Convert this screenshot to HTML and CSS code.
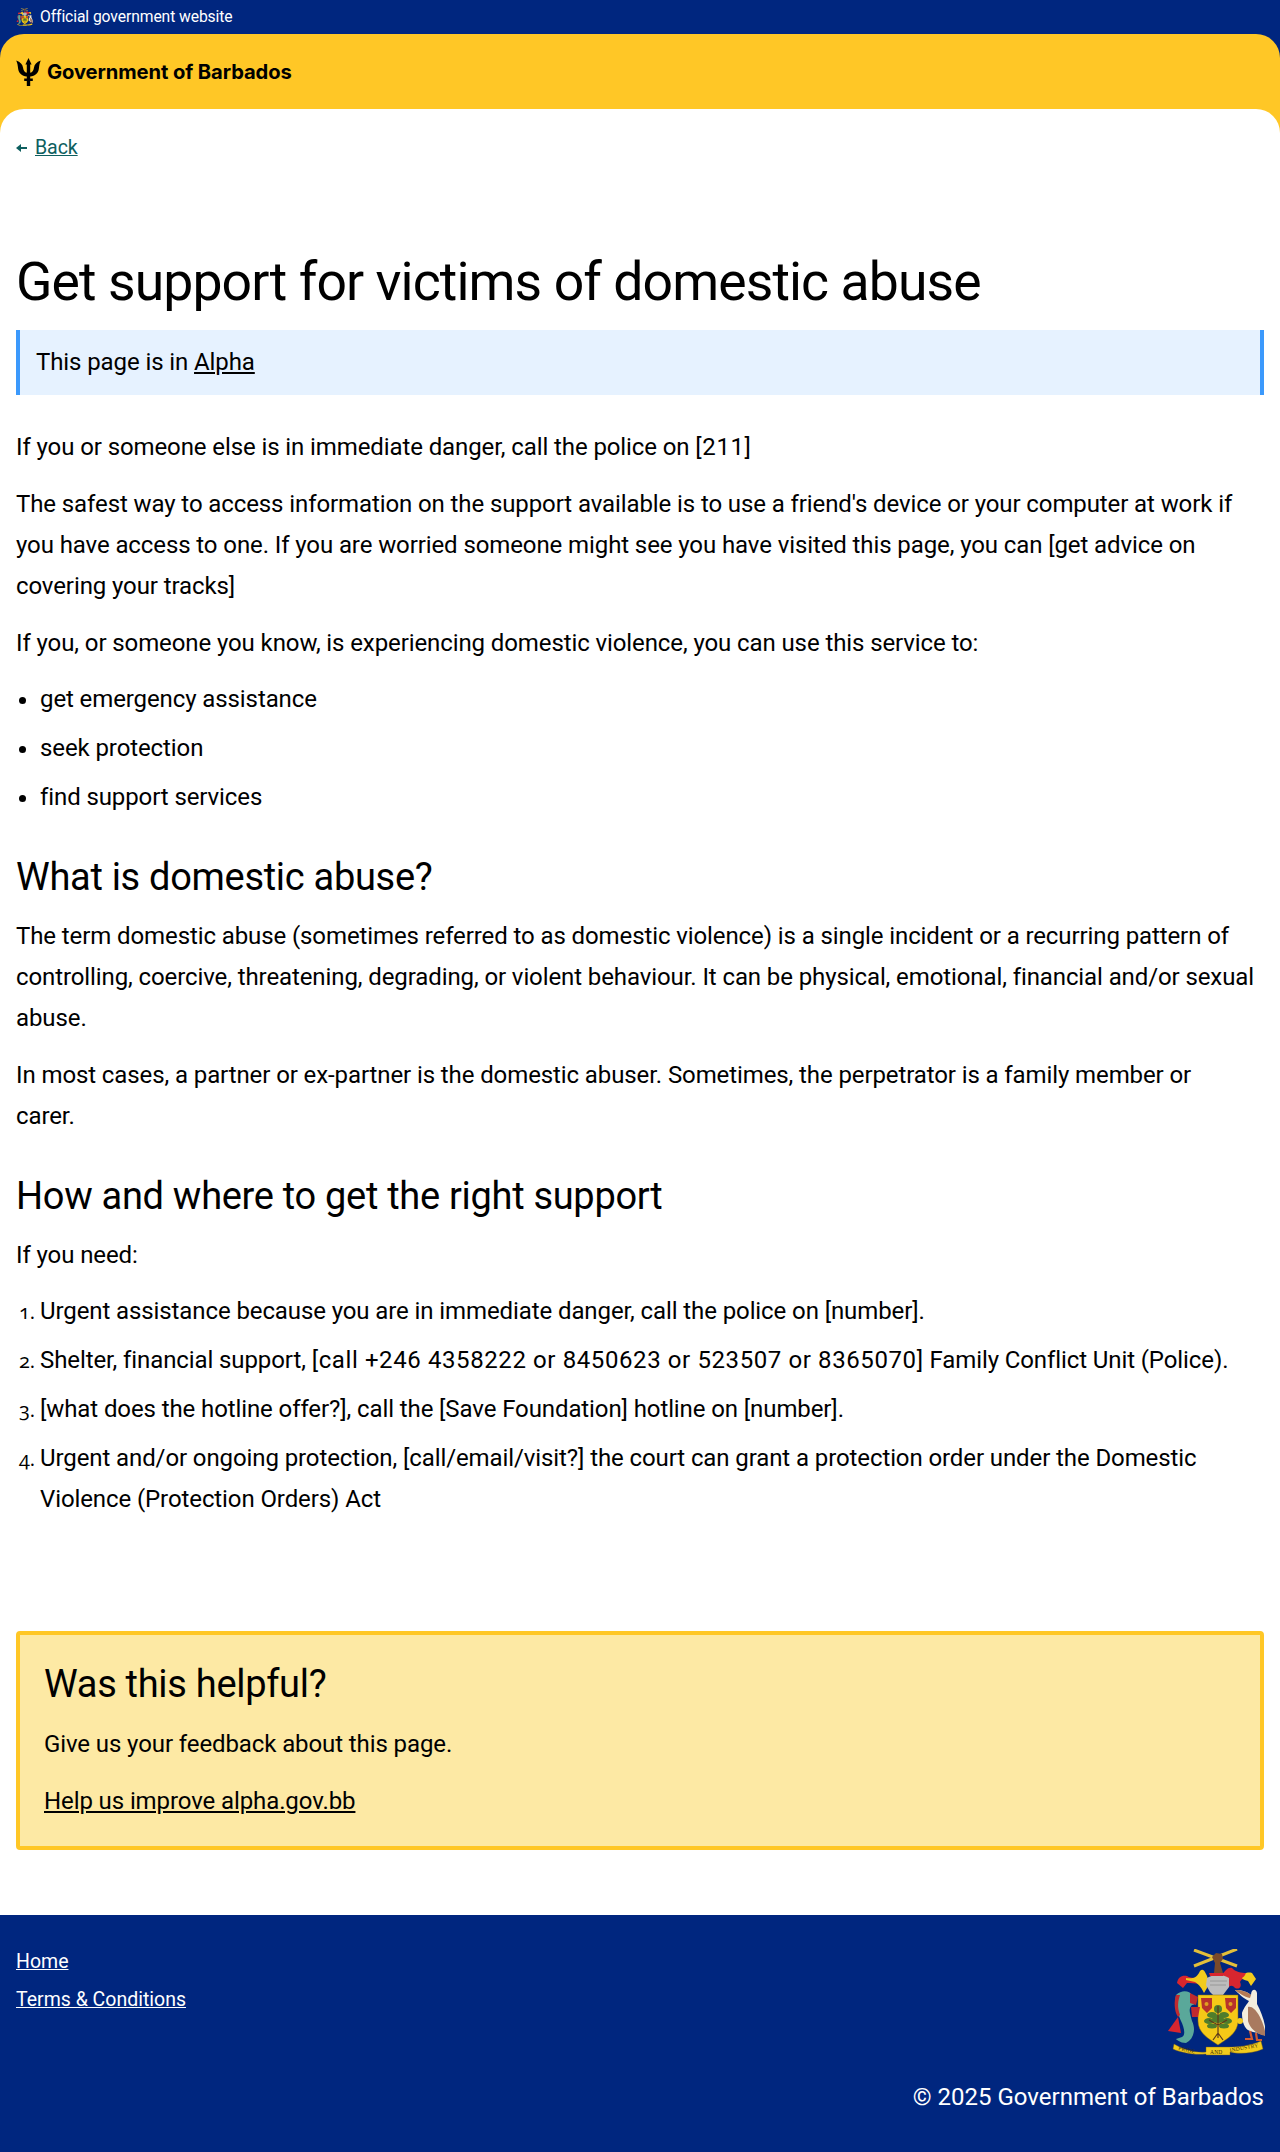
FILE: index.html
```html
<!DOCTYPE html>
<html lang="en">
<head>
    <meta charset="UTF-8">
    <meta name="viewport" content="width=device-width, initial-scale=1.0">
    <title>Get support for victims of domestic abuse</title>
    <link rel="stylesheet" href="styles.css">
</head>
<body>
    <svg class="sprite" width="0" height="0" aria-hidden="true">
        <symbol id="crest" viewBox="0 0 150 150">
            <!-- crossed sugar cane and arm -->
            <path d="M62 45 L105 28 M62 29 L105 45" stroke="#e3bf3a" stroke-width="3" fill="none"/>
            <path d="M80 36 L84 32 L90 33 L91 38 L88 42 L91 52 L82 52 L83 42 Z" fill="#7a4a2a"/>
            <!-- mantling -->
            <path d="M45 62 C46 56 50 54 55 55 C60 58 64 56 68 58 L68 63 C63 62 59 62 55 62 L51 67 Z" fill="#d8262f"/>
            <path d="M54 57 C60 58 64 57 67 52 C69 47 72 48 74 53 C76 56 77 62 75 67 L72 72 C70 68 68 64 63 61 C60 60 57 60 54 59 Z" fill="#f2cb1d"/>
            <path d="M90 54 C93 50 96 46 100 47 C103 51 110 52 114 52 L115 58 C112 57 109 58 108 61 C110 65 108 69 103 67 C100 63 97 65 95 68 L90 62 Z" fill="#d8262f"/>
            <path d="M114 52 C118 51 120 52 120 52 L124 58 L119 65 L116 60 C112 59 110 58 110 57 C112 56 113 54 114 52 Z" fill="#f2cb1d"/>
            <!-- helmet -->
            <path d="M75 57 C81 53 91 53 97 57 L97 66 L91 74 L83 76 L78 71 L74 64 Z" fill="#bdbdbd"/>
            <path d="M78 60 L95 60 M78 64 L94 64" stroke="#8f8f8f" stroke-width=".8"/>
            <path d="M77 52 L92 52 L91 55 L78 55 Z" fill="#d8262f"/>
            <!-- shield -->
            <path d="M66 74 L106 74 L106 100 C106 112 95 118 86 124 C77 118 66 112 66 100 Z" fill="#f5c917" stroke="#8a6d10" stroke-width=".5"/>
            <path d="M69 77 L80 77 L80 87 L75 92 L70 87 Z M93 77 L104 77 L104 87 L99 92 L94 87 Z" fill="#b8322a"/>
            <circle cx="74.500" cy="83" r="2" fill="#e0a020"/>
            <circle cx="98.500" cy="83" r="2" fill="#e0a020"/>
            <!-- fig tree -->
            <g fill="#4f7d2c">
                <ellipse cx="86" cy="88" rx="4" ry="4"/>
                <ellipse cx="80" cy="94" rx="5" ry="3"/>
                <ellipse cx="92" cy="94" rx="5" ry="3"/>
                <ellipse cx="77" cy="100" rx="5" ry="3"/>
                <ellipse cx="95" cy="100" rx="5" ry="3"/>
                <ellipse cx="86" cy="98" rx="6" ry="4"/>
                <ellipse cx="80" cy="105" rx="5" ry="2.500"/>
                <ellipse cx="92" cy="105" rx="5" ry="2.500"/>
            </g>
            <path d="M86 85 L86 117 M86 112 L81 119 M86 112 L91 119 M86 104 L77 99 M86 104 L95 99" stroke="#5d3a1c" stroke-width="1.200" fill="none"/>
            <!-- dolphin -->
            <path d="M44 74 C50 68 58 70 60 74 C66 78 64 84 60 84 C56 88 58 92 60 100 C64 108 62 118 54 122 C48 122 44 118 44 118 L50 116 C54 114 52 106 49 100 C46 92 42 84 44 74 Z" fill="#5aa89a"/>
            <path d="M46 96 L49 112 L36 110 Z" fill="#d8262f"/>
            <path d="M44 74 C42 80 42 90 46 96 L48 94 C45 86 46 80 48 74 Z M58 72 L66 76 L64 84 L58 82 Z M59 86 L68 86 L66 96 L60 96 Z" fill="#c02a2f"/>
            <!-- pelican -->
            <path d="M103 69 C110 69 116 71 119 74 C119 68 124 67 125 72 L125 83 C130 92 134 104 134 115 C128 112 124 112 118 110 C112 108 110 100 110 92 C112 86 116 82 117 80 C112 78 106 72 103 69 Z" fill="#f3eede"/>
            <path d="M103 69 C110 69 116 71 119 74 L118 77 C112 76 107 72 103 69 Z" fill="#b57a55"/>
            <path d="M116 86 C124 84 132 102 134 115 C126 114 118 108 116 100 Z" fill="#a97a5f"/>
            <path d="M118 110 L120 118 L113 118 M124 112 L125 119 L130 119" stroke="#d35a33" stroke-width="2.200" fill="none"/>
            <circle cx="108" cy="100" r="3" fill="#f2cb1d"/>
            <!-- motto scroll -->
            <path d="M42 123 C52 129 64 132 74 131 L74 126 L98 126 C105 126 118 125 129 120 L131 128 C120 133 105 133 98 131 L98 134 L74 134 L74 133 C62 134 50 132 41 128 Z" fill="#f2cb1d" stroke="#7a5b10" stroke-width=".4"/>
        </symbol>
    </svg>

    <header class="site-header">
        <div class="official-bar">
            <svg class="crest-small" width="17" height="18" viewBox="35 28 98 107"><use href="#crest" width="150" height="150"/></svg>
            <span>Official government website</span>
        </div>
        <div class="masthead">
            <svg class="trident" width="25" height="28" viewBox="0 0 25 28">
                <path d="M12.5 0 L15.6 6.500 L14.2 6.500 L14.2 14.800 C16.600 14.400 17.500 12.500 18 9.500 C18.500 6.500 20.500 4 24.800 2.500 C23.500 5 23.300 7.500 22.900 10.500 C22.300 15.200 19.200 18 14.200 18.600 L14.200 20.500 L16.800 20.500 L16.800 23 L14.200 23 L14.200 28 L10.800 28 L10.800 23 L8.200 23 L8.200 20.500 L10.800 20.500 L10.800 18.600 C5.800 18 2.700 15.200 2.100 10.500 C1.700 7.500 1.500 5 0.200 2.500 C4.500 4 6.500 6.500 7 9.500 C7.500 12.500 8.400 14.400 10.800 14.800 L10.800 6.500 L9.400 6.500 Z" fill="#000"/>
            </svg>
            <span class="masthead-title">Government of Barbados</span>
        </div>
    </header>

    <main class="page">
        <a class="back-link" href="#">
            <svg class="back-arrow" width="11" height="8" viewBox="0 0 11 8"><path d="M0 4 L5 0 L5 3 L11 3 L11 5 L5 5 L5 8 Z" fill="#0e5f5f"/></svg>
            <span class="back-text">Back</span>
        </a>

        <h1>Get support for victims of domestic abuse</h1>

        <div class="stage-banner">This page is in <a href="#">Alpha</a></div>

        <p>If you or someone else is in immediate danger, call the police on <span class="nums">[211]</span></p>
        <p>The safest way to access information on the support available is to use a friend's device or your computer at work if you have access to one. If you are worried someone might see you have visited this page, you can [get advice on covering your tracks]</p>
        <p>If you, or someone you know, is experiencing domestic violence, you can use this service to:</p>
        <ul>
            <li>get emergency assistance</li>
            <li>seek protection</li>
            <li>find support services</li>
        </ul>

        <h2>What is domestic abuse?</h2>
        <p>The term domestic abuse (sometimes referred to as domestic violence) is a single incident or a recurring pattern of controlling, coercive, threatening, degrading, or violent behaviour. It can be physical, emotional, financial and/or sexual abuse.</p>
        <p>In most cases, a partner or ex-partner is the domestic abuser. Sometimes, the perpetrator is a family member or<br>carer.</p>

        <h2>How and where to get the right support</h2>
        <p>If you need:</p>
        <ol>
            <li>Urgent assistance because you are in immediate danger, call the police on [number].</li>
            <li>Shelter, financial support, <span class="nums">[call +246 4358222 or 8450623 or 523507 or 8365070]</span> Family Conflict Unit (Police).</li>
            <li>[what does the hotline offer?], call the [Save Foundation] hotline on [number].</li>
            <li>Urgent and/or ongoing protection, [call/email/visit?] the court can grant a protection order under the Domestic Violence (Protection Orders) Act</li>
        </ol>

        <section class="feedback">
            <h2>Was this helpful?</h2>
            <p>Give us your feedback about this page.</p>
            <p><a href="#">Help us improve alpha.gov.bb</a></p>
        </section>
    </main>

    <footer class="site-footer">
        <div class="footer-top">
            <nav class="footer-links">
                <a href="#">Home</a>
                <a href="#">Terms &amp; Conditions</a>
            </nav>
            <svg class="crest-large" width="98" height="107" viewBox="35 28 98 107">
                <use href="#crest" width="150" height="150"/>
                <text class="motto" x="46" y="129" transform="rotate(12 46 129)">PRIDE</text>
                <text class="motto" x="78" y="132.500">AND</text>
                <text class="motto" x="98" y="131" transform="rotate(-10 98 131)">INDUSTRY</text>
            </svg>
        </div>
        <div class="copyright">© 2025 Government of Barbados</div>
    </footer>
</body>
</html>
```

FILE: styles.css
```css
body {
    margin: 0;
    font-family: Roboto, "Liberation Sans", sans-serif;
    font-size: 24px;
    line-height: 41px;
    letter-spacing: -0.1px;
    color: #000;
    background: #fff;
}
.sprite {
    position: absolute;
}
.motto {
    font-family: "Liberation Serif", serif;
    font-size: 5.5px;
    letter-spacing: .2px;
    fill: #3a2c08;
}
a {
    color: inherit;
}
.nums {
    letter-spacing: .6px;
}
.site-header {
    background: #00267f;
}
.official-bar {
    height: 34px;
    display: flex;
    align-items: center;
    gap: 7px;
    padding-left: 16px;
    color: #fff;
    font-size: 15.7px;
    line-height: 18px;
}
.masthead {
    height: 99px;
    box-sizing: border-box;
    padding: 24px 16px 0;
    display: flex;
    align-items: flex-start;
    gap: 6px;
    background: #ffc726;
    border-radius: 24px 24px 0 0;
}
.masthead-title {
    font-family: Inter, sans-serif;
    font-weight: 700;
    font-size: 20.2px;
    line-height: 28px;
}
.page {
    margin-top: -24px;
    padding: 25px 16px 65px;
    background: #fff;
    border-radius: 24px 24px 0 0;
}
.back-link {
    display: flex;
    align-items: center;
    gap: 8px;
    color: #0e5f5f;
    font-size: 19.6px;
    line-height: 28px;
    text-decoration: none;
}
.back-text {
    text-decoration: underline;
}
h1 {
    margin: 85px 0 0;
    font-size: 53.5px;
    line-height: 70px;
    font-weight: 400;
    letter-spacing: -0.9px;
}
h2 {
    margin: 36px 0 16px;
    font-size: 38px;
    line-height: 46px;
    font-weight: 400;
    letter-spacing: -0.3px;
}
p {
    margin: 16px 0 0;
}
.stage-banner {
    margin: 13px 0 32px;
    height: 65px;
    padding-left: 16px;
    line-height: 65px;
    background: #e6f2ff;
    border-left: 4px solid #3b99fc;
    border-right: 4px solid #3b99fc;
}
ul, ol {
    margin: 15px 0 0;
    padding-left: 24px;
}
li {
    margin-bottom: 8px;
}
ol li::marker {
    font-family: "Open Sans", sans-serif;
    font-size: 20px;
    font-variant-numeric: oldstyle-nums;
}
.feedback {
    margin-top: 111px;
    padding: 24px 24px 0;
    height: 219px;
    box-sizing: border-box;
    background: #fde9a4;
    border: 4px solid #ffc726;
    border-radius: 4px;
}
.feedback h2 {
    margin: 0;
    font-size: 38px;
    line-height: 50px;
}
.feedback p:first-of-type {
    margin-top: 15px;
}
.site-footer {
    height: 238px;
    box-sizing: border-box;
    padding: 33px 16px 0;
    background: #00267f;
    color: #fff;
    letter-spacing: 0;
}
.footer-top {
    display: flex;
    justify-content: space-between;
    align-items: flex-start;
}
.footer-links {
    display: flex;
    flex-direction: column;
    gap: 10px;
    font-size: 19.5px;
    line-height: 28px;
}
.crest-large {
    margin: 1px -1px 0 0;
}
.copyright {
    margin-top: 24px;
    text-align: right;
    font-size: 24px;
    line-height: 34px;
}
```
